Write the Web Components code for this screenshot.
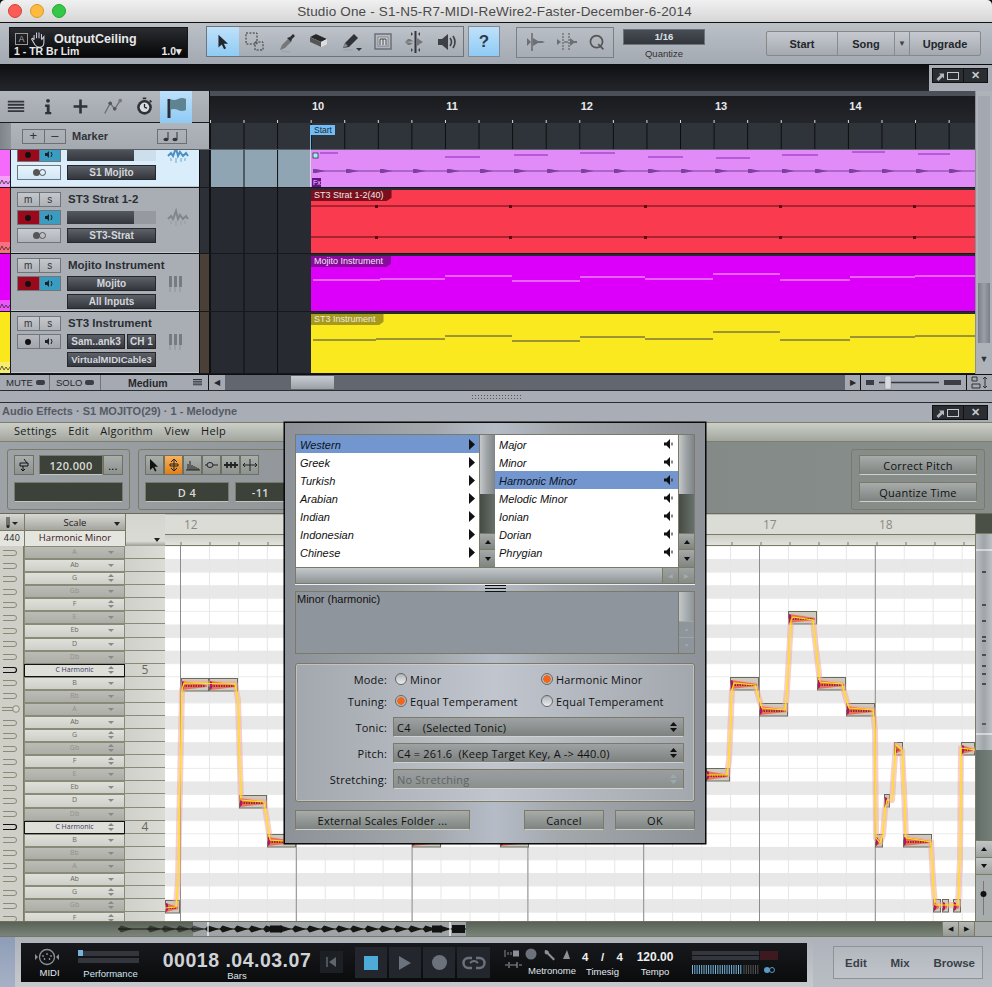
<!DOCTYPE html>
<html><head><meta charset="utf-8"><title>Studio One</title>
<style>
html,body{margin:0;padding:0;background:#111}
body{width:992px;height:987px;overflow:hidden;font-family:"Liberation Sans",Arial,sans-serif;display:flex;flex-direction:column}
</style></head><body>
<x-titlebar>Studio One - S1-N5-R7-MIDI-ReWire2-Faster-December-6-2014</x-titlebar>
<x-toolbar></x-toolbar>
<x-darkband></x-darkband>
<x-arrange></x-arrange>
<x-grip></x-grip>
<x-melodyne></x-melodyne>
<x-transport></x-transport>
<script>
const ICONS={
arrow:`<path d="M6 3v14l3.600-3.200 2.600 5.200 2.200-1-2.500-5.100h4.600z" fill="#23272d"/>`,
range:`<rect x="2" y="2" width="11" height="11" fill="none" stroke="#333" stroke-dasharray="2 1.400"/><rect x="11" y="11" width="8" height="8" fill="none" stroke="#333" stroke-dasharray="2 1.400"/>`,
dropper:`<path d="M4 19l2-5 6-6 3 3-6 6z" fill="#777"/><path d="M11 7l3-1 3-3 2 2-3 3-1 3z" fill="#2b2e33"/><path d="M5 20l9 1" stroke="#999" opacity=".6"/>`,
eraser:`<path d="M2 6l6-3 11 5v5l-6 3L2 11z" fill="#eee"/><path d="M2 6l6-3 11 5-6 3z" fill="#26282c"/><path d="M2 6v5l11 5v-5z" fill="#555"/><path d="M13 11l6-3v5l-6 3z" fill="#ddd"/>`,
pencil:`<path d="M3 17l2-5 9-9 4 4-9 9z" fill="#2f3237"/><path d="M3 17l2-5 3 3z" fill="#888"/><path d="M3 19h10" stroke="#999" opacity=".7"/><path d="M16 17h6l-3 3z" fill="#333"/>`,
mute:`<rect x="3" y="3" width="16" height="15" fill="none" stroke="#6b7078" stroke-width="1.500"/><rect x="6" y="6" width="10" height="9" fill="#fff" opacity=".5" stroke="#555"/><path d="M8 14V8h6v6M11 8v6" fill="none" stroke="#444"/>`,
split:`<path d="M1 11l3-3h2l3 2h3M1 11l3 3h2l3-2" fill="#777"/><path d="M13 7l6 4-6 4z" fill="#777"/><rect x="10.500" y="0" width="2" height="22" fill="#33363c"/><path d="M9 3L7 1v4zM14 3l2-2v4zM9 19l-2-2v4zM14 19l2-2v4z" fill="#444"/>`,
speaker:`<path d="M2 8h4l6-5v16l-6-5H2z" fill="#3d4046"/><path d="M14 7q3 4 0 8M17 5q4 6 0 12" fill="none" stroke="#3d4046" stroke-width="1.600"/>`,
hand:`<path d="M5 12V6M8 10V3M11 10V3M14 11V5M5 12l-2-2-1 1 4 7q2 3 6 3 5 0 5-6V8l-3 4" fill="none" stroke="#ccd" stroke-width="1.300"/>`,
burger:`<path d="M2 5h18M2 8.500h18M2 12h18M2 15.500h18" stroke="#33363c" stroke-width="2"/>`,
info:`<circle cx="11" cy="3.500" r="2.300" fill="#2f3237"/><path d="M7.500 8h5.500v9h2v3H7.500v-3h2v-6h-2z" fill="#2f3237"/>`,
plus:`<path d="M11 3v16M3 11h16" stroke="#2f3237" stroke-width="3"/>`,
auto:`<path d="M3 18l6-11 5 6 6-9" fill="none" stroke="#6c7078" stroke-width="1.400"/><circle cx="9" cy="7" r="2" fill="#555"/><circle cx="14" cy="13" r="2" fill="#555"/><circle cx="20" cy="4" r="2" fill="#777"/>`,
clock:`<circle cx="11" cy="12" r="8.500" fill="#2f3237"/><circle cx="11" cy="12" r="5.500" fill="#d9dde0"/><path d="M11 12V8M11 12l3 1" stroke="#222" stroke-width="1.500"/><path d="M9 1.500h4M17 4l2 2" stroke="#2f3237" stroke-width="2"/>`,
flag:`<path d="M4 3v19" stroke="#2b2e33" stroke-width="3"/><path d="M5 3q4 2 8 0t8 0v11q-4 2-8 0t-8 0z" fill="#5f8491"/>`,
t1:`<path d="M7 1v18" stroke="#555" stroke-width="1.200"/><path d="M2 6v8l4-4zM8 6l5 3h4l3 1-3 1h-4l-5 3z" fill="#6b7078"/>`,
t2:`<path d="M7 1v18M13 1v18" stroke="#555" stroke-dasharray="2 1"/><path d="M1 7v6l4-3zM8 10h4M14 6l4 3h3v2h-3l-4 3z" fill="#6b7078"/><path d="M8 10h4" stroke="#555"/>`,
q:`<circle cx="11" cy="10" r="7" fill="none" stroke="#555" stroke-width="2"/><path d="M13 13l6 6" stroke="#555" stroke-width="2"/>`,
pop:`<path d="M3 18l8-8-3-3h10v10l-3-3-8 8z" fill="#b4b7bc"/>`,
};
function def(name,css,render){
  customElements.define(name,class extends HTMLElement{
    connectedCallback(){
      if(this.shadowRoot)return;
      const r=this.attachShadow({mode:'open'});
      r.innerHTML=`<style>${css}</style>`+render(this);
    }
  });
}
def('x-i',`:host{display:inline-flex;align-items:center;justify-content:center}svg{display:block}`,
 e=>{const s=e.getAttribute('s')||22;return `<svg width="${s}" height="${s}" viewBox="0 0 22 22">${ICONS[e.getAttribute('n')]}</svg>`});

def('x-titlebar',`:host{display:flex;flex:0 0 22px;height:22px;align-items:center;position:relative;background:linear-gradient(#f0f0f0,#d6d6d6);border-bottom:1px solid #111;border-radius:5px 5px 0 0;color:#4a4a4a;font-size:13.500px;padding-left:8px;letter-spacing:.16px}
 .l{display:flex;gap:8px}.l i{width:12px;height:12px;border-radius:50%;display:block}
 .t{flex:1;text-align:center;padding-right:69px;white-space:nowrap}`,
 ()=>`<div class="l"><i style="background:#fb5c55;border:.5px solid #d8403a"></i><i style="background:#fcbb3e;border:.5px solid #d89a20"></i><i style="background:#35c748;border:.5px solid #1ea92f"></i></div><div class="t"><slot></slot></div>`);

def('x-toolbar',`:host{display:flex;flex:0 0 41px;height:41px;align-items:flex-start;background:linear-gradient(#bcc1c8,#a3a9b1);border-bottom:1px solid #0c0c0c;box-sizing:content-box;color:#222}
 .param{margin:4px 0 0 9px;width:179px;height:31px;background:linear-gradient(#2a2c30,#060607);box-sizing:border-box;position:relative;color:#e8e8ea;font-weight:bold;display:grid;grid-template-columns:1fr auto;grid-template-rows:18px 11px;padding:0 5px 0 4px;border:1px solid #16171a}
 .a{display:inline-block;border:1px solid #999;color:#aaa;width:11px;height:10px;font-size:9px;text-align:center;line-height:10px;font-weight:normal}
 .top{grid-column:1/3;display:flex;align-items:center;gap:2px;height:18px;box-sizing:border-box;font-size:12.500px;padding-top:3px;margin-left:1px}
 .top b{margin-left:4px}
 .b{font-size:10.500px;line-height:11px}
 .tools{margin:3px 0 0 18px;height:31px;display:flex;border:1px solid #6f747b;box-sizing:border-box;width:258px;background:linear-gradient(#bec3ca,#a6acb4)}
 .tools>*{width:32px;flex:0 0 32px}
 .on{background:linear-gradient(#bfe1fb,#8fcbf5)}
 .q{margin:3px 0 0 4px;width:32px;height:31px;box-sizing:border-box;display:flex;align-items:center;justify-content:center;font-weight:bold;font-size:17px;color:#2f3a48;background:linear-gradient(#bfe1fb,#8fcbf5);border:1px solid #858b92}
 .g2{margin:4px 0 0 16px;width:98px;height:31px;box-sizing:border-box;border:1px solid #7a7f86;display:flex;align-items:center;padding:0 3px;justify-content:space-around}
 .qz{margin:6px 0 0 9px;width:82px;text-align:center;font-size:9.500px;color:#333}
 .qz div{background:linear-gradient(#474c54,#33373d);color:#dfe3e8;font-weight:bold;font-size:9.500px;height:16px;line-height:14px;margin-bottom:3px;border:1px solid #6e7279;box-sizing:border-box}
 .btns{margin:8px 0 0 61px;display:flex;height:25px;font-weight:bold;font-size:11px;color:#23262b;border:1px solid #888;border-radius:2px;box-sizing:border-box;background:linear-gradient(#c6cad0,#a4a9b0)}
 .btns span{display:flex;align-items:center;justify-content:center;border-right:1px solid #868b92;box-sizing:border-box}`,
 ()=>`<div class="param"><div class="top"><span class="a">A</span><x-i n="hand" s="18"></x-i><b>OutputCeiling</b></div><div class="b">1 - TR Br Lim</div><div class="b">1.0▾</div></div>
 <div class="tools"><span class="on" style="display:flex;align-items:center;justify-content:center"><x-i n="arrow" s="20"></x-i></span>${['range','dropper','eraser','pencil','mute','split','speaker'].map(n=>`<x-i n="${n}"></x-i>`).join('')}</div>
 <div class="q">?</div>
 <div class="g2"><x-i n="t1"></x-i><x-i n="t2"></x-i><x-i n="q" s="19"></x-i></div>
 <div class="qz"><div>1/16</div>Quantize</div>
 <div class="btns"><span style="width:71px">Start</span><span style="width:57px">Song</span><span style="width:15px;font-size:8px;color:#444">▼</span><span style="width:70px;border:0">Upgrade</span></div>`);

def('x-winbtns',`:host{display:flex;width:56px;height:15px;background:#2a2d32;border:1px solid #111;box-sizing:border-box;align-items:center;color:#bbb;font-size:11px}
 .p{flex:0 0 31px;display:flex;align-items:center;gap:1px;border-right:1px solid #111;height:100%;padding-left:2px;box-sizing:border-box}
 .r{width:10px;height:6px;border:1px solid #c6c9cf}
 .x{flex:1;text-align:center;font-weight:bold;color:#c4c8cd}`,
 ()=>`<div class="p"><x-i n="pop" s="11"></x-i><div class="r"></div></div><div class="x">✕</div>`);

def('x-darkband',`:host{display:flex;flex:0 0 26px;height:26px;justify-content:flex-end;background:linear-gradient(#0f1012,#24262b)}
 .w{width:63px;background:#a9aeb6;padding:3px 4px 0 3px;box-sizing:border-box}`,
 ()=>`<div class="w"><x-winbtns></x-winbtns></div>`);

def('x-btnpair',`:host{display:flex;width:44px;height:15px;box-sizing:border-box;border:1px solid #70747b;background:linear-gradient(#c4c8cd,#aeb2b8);font-size:10px;color:#333}
 span{flex:1;display:flex;align-items:center;justify-content:center}
 span+span{border-left:1px solid #70747b}`,
 e=>`<span>m</span><span>s</span>`);
def('x-recpair',`:host{display:flex;width:44px;height:15px;box-sizing:border-box;border:1px solid #70747b}
 span{flex:1;display:flex;align-items:center;justify-content:center}
 .a{background:#9b0a1c}.b{background:#3a9cc0;border-left:1px solid #70747b}
 :host([off]) .a,:host([off]) .b{background:linear-gradient(#b5b9be,#a3a7ad)}
 i{width:6px;height:6px;border-radius:50%;background:#111}`,
 ()=>`<span class="a"><i></i></span><span class="b"><svg width="9" height="9" viewBox="0 0 9 9"><path d="M0 3h2l2-2v7L2 6H0z" fill="#1c2228"/><path d="M6 2q2 2.500 0 5" stroke="#1c2228" fill="none"/></svg></span>`);
def('x-dd',`:host{display:flex;height:15px;flex:1;box-sizing:border-box;align-items:center;justify-content:center;background:linear-gradient(#5d6169,#33363c);border:1px solid #25272b;color:#d3d6db;font-weight:bold;font-size:10px;white-space:nowrap}`,()=>`<slot></slot>`);
def('x-toggle',`:host{display:flex;width:44px;height:15px;box-sizing:border-box;align-items:center;justify-content:center;border:1px solid #70747b;background:linear-gradient(#c8ccd1,#afb3b9)}
 :host([sel]){background:linear-gradient(#e8f4fb,#cfe8f6)} i{display:block;width:7px;height:7px;border-radius:50%;background:#555}
 i+i{background:transparent;border:1px solid #555;margin-left:-1px;width:5px;height:5px}`,()=>`<i></i><i></i>`);
def('x-fader',`:host{display:flex;flex:1;height:13px;margin-top:1px;background:#969aa0;box-sizing:border-box} i{display:block;width:75%;background:linear-gradient(#54585f,#33363c)} :host([sel]){background:#cddfea}`,()=>`<i></i>`);
def('x-clip',`:host{display:block;position:relative;overflow:hidden;width:664px}
 .l{position:absolute;left:0;top:0;height:11px;font-size:9px;line-height:11px;padding:0 8px 0 3px;white-space:nowrap;color:#e9e9e9;clip-path:polygon(0 0,100% 0,100% 70%,94% 100%,0 100%)}
 svg{display:block}`,
 e=>{
  const h=+e.getAttribute('h'),top=+e.getAttribute('y0'),k=e.getAttribute('k');let s='';
  const Y=y=>y-top,X=x=>x-311;
  if(k=='1'){
    [[320,338,153],[445,480,157],[514,548,155],[580,615,153],[648,683,157],[716,750,158],[782,818,155],[852,885,152],[918,950,154]].forEach(a=>s+=`<path d="M${X(a[0])} ${Y(a[2])}H${X(a[1])}" stroke="#8e28b2"/>`);
    s+=`<path d="M2 ${Y(171)}H664" stroke="#7f3f9e"/>`;
    for(let x=313;x<970;x+=67){for(const dx of [0,33]){s+=`<path d="M${X(x+dx)} ${Y(169)}l3 0 7 1.500 3 .5-3 .5-7 1.500-3 0z" fill="#7f3f9e"/>`}}
    s+=`<rect x="2" y="${Y(153)}" width="5" height="5" fill="#9ff0ff" stroke="#222" stroke-width=".7"/><rect x="1" y="${Y(178)}" width="9" height="9" fill="#6a0f8e"/>`;
  }
  if(k=='2'){
    s+=`<path d="M0 ${Y(205)}H664M0 ${Y(236)}H664" stroke="#5d0a14"/>`;
    [376,510,645,780,914].forEach(x=>{s+=`<rect x="${X(x)-1}" y="${Y(204)}" width="3" height="3" fill="#5d0a14"/><rect x="${X(x)-1}" y="${Y(235)}" width="3" height="3" fill="#5d0a14"/>`});
  }
  if(k=='3'){
    [[313,380,279],[380,445,278],[445,512,275],[512,580,280],[580,645,276],[645,713,278],[713,780,273],[780,850,279],[850,915,276],[915,975,275]].forEach(a=>s+=`<path d="M${X(a[0])} ${Y(a[2])}H${X(a[1])}" stroke="#f3c4ff"/>`);
  }
  if(k=='4'){
    [[313,376,339],[376,445,338],[445,512,335],[512,580,340],[580,645,336],[645,713,338],[713,780,331],[780,850,339],[850,915,336],[915,975,335]].forEach(a=>s+=`<path d="M${X(a[0])} ${Y(a[2])}H${X(a[1])}" stroke="#3f3f4a"/>`);
  }
  const lab=e.getAttribute('label');
  const fx=k=='1'?`<span style="position:absolute;left:2px;top:${Y(178)}px;font-size:7px;color:#e9d8f0;line-height:9px;white-space:nowrap">Fx</span>`:'';
  return `<svg width="664" height="${h}">${s}</svg>${lab?`<div class="l" style="background:${e.getAttribute('lb')}">${lab}</div>`:''}${fx}`;
 });
def('x-track',`:host{display:grid;grid-template-columns:10px 1px 188px 1px 9px 1px 100px 665px;flex:none;background:#111;border-bottom:1px solid #16181b;box-sizing:border-box}
 .strip{position:relative;display:flex;flex-direction:column;justify-content:flex-end}
 .strip svg{display:block}
 .panel{background:#a9adb4;display:grid;grid-template-columns:44px 89px 1fr;grid-template-rows:15px 15px 15px;gap:3px 6px;padding:4px 0 0 6px;align-content:start;border-bottom:1px solid #c4c8cc}
 :host([sel]) .panel{background:#d9eefa}
 .panel>*{min-width:0}
 .name{font-weight:bold;font-size:11.500px;color:#2a2d33;line-height:15px;grid-column:2/4;grid-row:1;white-space:nowrap;padding-left:1px}
 .ic{display:flex;align-items:center;padding-left:5px;grid-row:2;grid-column:3}
 .slotrow{display:flex;gap:2px}
 .col{background:#2d3137}
 .bg{background-color:#272b31;background-image:linear-gradient(90deg,#0c0d0f 1px,transparent 1px);background-size:33.58px 100%;background-position:33.5px 0}
 :host([sel]) .bg{background-color:#8fa5b3}
 .clipw{padding:1px 0 0 1px;overflow:hidden}`,
 e=>{const c=e.getAttribute('color'),d=e.getAttribute('dark'),w=e.getAttribute('wave');
  const sel=e.hasAttribute('sel');
  const nm=e.getAttribute('name');
  const wav=w=='keys'
   ?`<svg width="20" height="20" viewBox="0 0 20 20"><path d="M2 2h3v11h-3zM7 2h3v11h-3zM12 2h3v11h-3z" fill="#777b81"/><path d="M3 13v5M8 13v5M13 13v5" stroke="#8e9298"/></svg>`
   :`<svg width="22" height="20" viewBox="0 0 22 20"><path d="M1 11l3-3 2 3 3-8 2 8 2-4 3 4 3-3 2 3" fill="none" stroke="${sel?'#4a90c4':'#82868c'}" stroke-width="2"/><path d="M4 13v3M9 13v5M14 13v4M18 13v3" stroke="${sel?'#6aa6d1':'#979ba1'}"/></svg>`;
  return `<div class="strip" style="background:${c}"><svg width="10" height="11"><rect width="10" height="11" fill="${d}"/><path d="M0 8l2-4 2 4 2-3 2 3 2-3" fill="none" stroke="#222" stroke-width=".7"/></svg></div><div style="background:#1a1c20"></div>
  <div class="panel">
   ${nm?`<x-btnpair style="grid-row:1;grid-column:1"></x-btnpair><div class="name">${nm}</div>`:''}
   <x-recpair ${e.hasAttribute('recoff')?'off':''} style="grid-row:2;grid-column:1"></x-recpair><div class="slotrow" style="grid-row:2;grid-column:2"><slot name="a"></slot></div><div class="ic">${wav}</div>
   <div class="slotrow" style="grid-row:3;grid-column:1"><slot name="c"></slot></div><div class="slotrow" style="grid-row:3;grid-column:2"><slot name="b"></slot></div>
  </div><div style="background:#0d0e10"></div><div class="col" style="background:${e.getAttribute('col')||'#2d3137'}"></div><div style="background:#0d0e10"></div>
  <div class="bg"></div><div class="clipw" style="background:${e.getAttribute('cb')}"><slot name="clip"></slot></div>`});

def('x-vscroll',`:host{display:flex;flex-direction:column;width:17px;background:#aeb3ba;box-sizing:border-box;border-left:1px solid #8a8f96}
 .tr{height:187px;margin:5px 2px 0 2px;background:#a4a9b1}
 .th{height:60px;margin:0 2px;background:linear-gradient(90deg,#7a8088,#9ba0a8,#7a8088)}
 .ar{flex:1;display:flex;align-items:center;justify-content:center;font-size:9px;color:#333}`,
 ()=>`<div class="tr"></div><div class="th"></div><div class="ar">▼</div>`);

def('x-arrange',`:host{display:flex;flex-direction:column;flex:0 0 299px;height:299px;background:#111;overflow:hidden}
 .top{display:flex;height:284px}
 .main{width:975px;flex:none;display:flex;flex-direction:column}
 .r1{display:flex;height:32px;flex:none}
 .tools{flex:0 0 209px;width:209px;background:linear-gradient(#b2b6bd,#a3a8af);display:flex;align-items:center;padding-left:5px;box-sizing:border-box;gap:10px;border-bottom:1px solid #1a1b1e}
 .tools>*{width:22px;flex:none}
 .fl{width:32px!important;height:32px;background:linear-gradient(#bde0fb,#8fcaf4);display:flex;align-items:center;justify-content:center;margin-left:-5px}
 .ruler{flex:1;min-width:0;overflow:hidden;margin-left:1px;background:linear-gradient(#4b4f57 5px,#191b1f 5px,#24262b);position:relative;display:flex;color:#e9eaec;font-weight:bold;font-size:11px;padding:9px 0 0 102px;box-sizing:border-box}
 .ruler span{width:134.330px;flex:none}
 .ticks{position:absolute;left:0;right:0;bottom:0;height:3px;background-image:linear-gradient(90deg,#dcdcdc 1px,transparent 1px);background-size:33.58px 3px;background-position:33.5px 0}
 .r2{display:flex;height:27px;flex:none;border-bottom:1px solid #5b5f66;box-sizing:border-box}
 .mk{flex:0 0 209px;width:209px;display:grid;grid-template-columns:11px 55px 1fr 30px;background:linear-gradient(#b0b4bb,#a5a9b0);align-items:center;padding-right:22px;box-sizing:border-box;font-weight:bold;font-size:11px;color:#303339}
 .mk .g{background:linear-gradient(90deg,#7f848b,#90959b);height:100%;margin-right:0}
 .pm{margin-left:11px;display:flex;width:44px;height:15px;border:1px solid #6b6f76;box-sizing:border-box;font-weight:normal;font-size:13px;line-height:12px}
 .pm span{flex:1;text-align:center}.pm span+span{border-left:1px solid #6b6f76}
 .mk .lbl{padding-left:6px}
 .nb{width:30px;height:15px;border:1px solid #6b6f76;box-sizing:border-box;display:flex;align-items:center;justify-content:center}
 .nb svg{display:block}
 .tl{flex:1;margin-left:1px;background-color:#2f333a;background-image:linear-gradient(90deg,#0c0d0f 1px,transparent 1px);background-size:33.58px 100%;background-position:33.5px 0;padding-left:100px;box-sizing:border-box}
 .st{display:block;border-left:1px solid #6fbdf5;height:100%;box-sizing:border-box;width:200px}
 .st b{display:block;background:#72bdf5;width:24px;height:10px;margin:2px 0 0 0;font-size:8.500px;font-weight:normal;color:#1d2a36;line-height:10px;padding-left:3px;box-sizing:border-box}
 .tracks{overflow:hidden;flex:1;display:flex;flex-direction:column}
 .bot{display:flex;height:15px;background:#a5a9b1;border-top:1px solid #0e0f11;box-sizing:content-box;font-size:9.500px;color:#25272c}
 .bot>div{display:flex;align-items:center;box-sizing:border-box;border-right:1px solid #70747b;height:100%}
 .pill{display:inline-block;width:9px;height:5px;border-radius:2px;background:#3b3e44;margin-left:3px}
 .sb{flex:0 0 652px;border-right:1px solid #111!important;padding-left:5px;gap:5px}
 .sbt{flex:1;height:100%;background:#62676f;position:relative}
 .sbt i{position:absolute;left:66px;top:1px;height:13px;width:43px;background:linear-gradient(#c8ccd2,#9ba0a7)}
 .z{gap:5px;padding-left:5px;flex:0 0 106px;border-right:1px solid #111!important}
 .zb{height:5px;background:#3b3e44;display:block}`,
 ()=>`<div class="top"><div class="main">
 <div class="r1"><div class="tools"><x-i n="burger" s="20"></x-i><x-i n="info" s="18"></x-i><x-i n="plus" s="19"></x-i><x-i n="auto" s="20"></x-i><x-i n="clock" s="19"></x-i><span class="fl"><x-i n="flag"></x-i></span></div>
  <div class="ruler"><span>10</span><span>11</span><span>12</span><span>13</span><span>14</span><div class="ticks"></div></div></div>
 <div class="r2"><div class="mk"><div class="g"></div><div class="pm"><span>+</span><span>–</span></div><div class="lbl">Marker</div><div class="nb"><svg width="20" height="11"><path d="M6 1v7M15 1v7" stroke="#333"/><ellipse cx="4" cy="8.500" rx="2.500" ry="1.800" fill="#333"/><ellipse cx="13" cy="8.500" rx="2.500" ry="1.800" fill="#333"/></svg></div></div>
  <div class="tl"><span class="st"><b>Start</b></span></div></div>
 <div class="tracks">
  <x-track color="#f569fb" dark="#f4a0f8" cb="#dadada" sel col="#2d3137" style="height:63px;margin-top:-25px">
    <x-fader sel slot="a"></x-fader><x-toggle sel slot="c"></x-toggle><x-dd slot="b">S1 Mojito</x-dd>
    <x-clip slot="clip" k="1" y0="126" h="62" style="background:#e08bf7"></x-clip></x-track>
  <x-track name="ST3 Strat 1-2" color="#fa3a4e" dark="#f9707c" cb="#272b31" style="height:66px">
    <x-fader slot="a"></x-fader><x-toggle slot="c"></x-toggle><x-dd slot="b">ST3-Strat</x-dd>
    <x-clip slot="clip" k="2" y0="189" h="63" label="ST3 Strat 1-2(40)" lb="#7c0f1c" style="background:#fa3a4e;margin-top:1px"></x-clip></x-track>
  <x-track name="Mojito Instrument" color="#e200fb" dark="#ed55fb" cb="#272b31" wave="keys" col="#4a4038" style="height:58px">
    <x-dd slot="a">Mojito</x-dd><span slot="c"></span><x-dd slot="b">All Inputs</x-dd>
    <x-clip slot="clip" k="3" y0="255" h="56" label="Mojito Instrument" lb="#8a0a9e" style="background:#dc00fb;margin-top:1px"></x-clip></x-track>
  <x-track name="ST3 Instrument" color="#fbe81c" dark="#f6ec70" cb="#272b31" wave="keys" col="#4a4038" recoff style="height:62px">
    <x-dd slot="a" style="flex:0 0 58px">Sam..ank3</x-dd><x-dd slot="a">CH 1</x-dd><span slot="c"></span><x-dd slot="b" style="font-size:9.500px">VirtualMIDICable3</x-dd>
    <x-clip slot="clip" k="4" y0="313" h="59" label="ST3 Instrument" lb="#a79a18" style="background:#fbe920;margin-top:1px"></x-clip></x-track>
 </div></div><x-vscroll></x-vscroll></div>
 <div class="bot"><div style="width:50px;padding-left:6px">MUTE<i class="pill"></i></div><div style="width:51px;padding-left:6px">SOLO<i class="pill"></i></div>
  <div style="flex:0 0 108px;justify-content:space-between;padding:0 5px 0 27px;border-right:1px solid #111;font-weight:bold;font-size:10.500px">Medium<x-i n="burger" s="11"></x-i></div>
  <div class="sb"><span style="font-size:8px">◀</span><div class="sbt"><i></i></div><span style="font-size:8px;padding-right:4px">▶</span></div>
  <div class="z"><i class="zb" style="width:8px"></i><svg width="60" height="15"><path d="M0 7.500H60" stroke="#33363c" stroke-width="1.500"/><rect x="6" y="1" width="6" height="13" fill="#d8dbdf" stroke="#888" stroke-width=".5"/></svg><i class="zb" style="width:17px"></i></div>
  <div style="border:0;padding-left:4px"><svg width="18" height="13"><path d="M1 1h5v4H1zM1 8h8v4H1z" fill="none" stroke="#333"/><path d="M14 1v11M12 3l2-2 2 2M12 10l2 2 2-2" stroke="#333" fill="none"/></svg></div></div>`);

def('x-grip',`:host{display:flex;flex:0 0 13px;height:13px;background:#a8adb5;border-top:1px solid #2a2c30;border-bottom:1px solid #2a2c30;box-sizing:border-box;align-items:center;justify-content:center}
 i{display:block;width:50px;height:5px;background-image:radial-gradient(#555 40%,transparent 45%);background-size:3px 3px}`,()=>`<i></i>`);

def('x-mbtn',`:host{display:flex;align-items:center;justify-content:center;box-sizing:border-box;height:20px;background:linear-gradient(#a7acab,#7e8481);border:1px solid #7a7a66;border-bottom-color:#d0d0c4;color:#111;font-family:"Open Sans","Noto Sans",sans-serif;font-size:11px;letter-spacing:.25px;white-space:nowrap}`,()=>`<slot></slot>`);
def('x-radio',`:host{display:flex;align-items:center;gap:3px;font-family:"Open Sans",sans-serif;font-size:11px;letter-spacing:.2px;color:#111}
 i{width:12px;height:12px;border-radius:50%;display:block;box-sizing:border-box;border:1px solid #666;background:linear-gradient(#aeb3b8,#eceef0)}
 :host([on]) i{background:radial-gradient(circle,#f0661a 0 3.500px,#bbb 4px)}`,()=>`<i></i><slot></slot>`);
def('x-select',`:host{display:flex;align-items:center;height:20px;box-sizing:border-box;border:1px solid #7a7a66;border-bottom-color:#d2d2c8;background:linear-gradient(#9ea2a4,#7d8280);padding:0 6px 0 3px;font-family:"Open Sans",sans-serif;font-size:11px;letter-spacing:.2px;color:#111;flex:1;white-space:pre}
 :host([dis]){color:#5f6462;background:linear-gradient(#9a9e9f,#8b908f)}
 .s{flex:1}svg{display:block}`,e=>`<span class="s"><slot></slot></span><svg width="7" height="10" viewBox="0 0 7 10"><path d="M0 4l3.500-4 3.500 4zM0 6l3.500 4 3.500-4z" fill="${e.hasAttribute('dis')?'#9aa':'#111'}"/></svg>`);
def('x-listscroll',`:host{display:flex;flex-direction:column;width:15px;flex:none;background:#5e6660;border-left:1px solid #7a7a66}
 .th{height:59px;background:linear-gradient(90deg,#c4c8cb,#9ca1a4,#7f8487)}
 .tr{flex:1;background:linear-gradient(90deg,#454c45,#67706a)}
 .ar{height:15px;flex:none;border-top:1px solid #7a7a66;background:linear-gradient(#a5aaaa,#80857f);display:flex;align-items:center;justify-content:center}
 .ar i{display:block;width:0;height:0;border:3px solid transparent;border-bottom:4px solid #111;border-top:0}
 .ar.d i{border-top:4px solid #111;border-bottom:0}`,
 ()=>`<div class="th"></div><div class="tr"></div><div class="ar"><i></i></div><div class="ar d" style="height:17px"><i></i></div>`);
def('x-scale-dialog',`:host{position:absolute;left:284px;top:19px;width:422px;height:422px;box-sizing:border-box;border:1px solid #0a0a0a;background:linear-gradient(90deg,#8d9298 0,#a3a8ad 35%,#b6bcc7 50%,#a3a8ad 65%,#8d9298 100%);padding:11px 10px 0;display:flex;flex-direction:column;color:#111;font-family:"Open Sans",sans-serif;box-shadow:0 0 0 .5px #000}
 .lists{border:1px solid #7a7a66;display:flex;flex-direction:column;height:150px;box-sizing:border-box;background:#fff}
 .two{display:flex;height:132px;overflow:hidden}
 .list{flex:1;background:#fff;overflow:hidden;font-family:"Liberation Sans",sans-serif;font-style:italic;font-size:11px;color:#111}
 .row{height:18px;line-height:16px;padding:2px 4px 0;box-sizing:border-box;display:flex;justify-content:space-between;align-items:center}
 .row svg{margin-top:-2px}
 .row.s{background:#7296cd;color:#0a1426}
 .hs{display:flex;height:16px;border-top:1px solid #7a7a66;box-sizing:border-box;flex:1}
 .hs .bar{flex:1;background:linear-gradient(#c3c8cb,#8f9497)}
 .hs .ar{width:15px;background:linear-gradient(#9ea3a3,#868b86);border-left:1px solid #7a7a66;text-align:center;font-size:6px;line-height:16px;color:#aaa}
 .split{height:7px;flex:none;border-top:1px solid #eee;display:flex;align-items:center;justify-content:center;box-sizing:border-box}
 .split i{display:block;width:21px;height:5px;border-top:1px solid #111;border-bottom:1px solid #111;position:relative;background:linear-gradient(#111,#111) 0 50%/100% 1px no-repeat}
 .desc{height:63px;flex:none;border:1px solid #7a7a66;box-sizing:border-box;background:#8f959d;display:flex;font-family:"Liberation Sans",sans-serif;font-size:11px;padding-left:1px;line-height:14px;padding-top:0}
 .desc .t{flex:1}
 .ds{width:15px;flex:none;display:flex;flex-direction:column;border-left:1px solid #7a7a66}
 .ds b{height:31px;background:linear-gradient(90deg,#c2c7ca,#8f9497);display:block}
 .ds u{height:16px;background:#8f959d;display:block;border-top:1px solid #a0a5a8;font-size:5px;text-align:center;text-decoration:none;color:#aaa;line-height:14px}
 .grp{margin-top:9px;height:139px;flex:none;box-sizing:border-box;border:1px solid #7a7a66;border-radius:3px;padding:4px 10px 0 0;display:grid;grid-template-columns:97px 1fr;align-content:start;font-size:11px;letter-spacing:.2px;background:linear-gradient(90deg,#a3a8ae,#c0c5ce 50%,#a3a8ae);box-shadow:inset 0 0 0 .5px #d8d8d8}
 .lb{text-align:right;padding-right:6px;display:flex;align-items:center;justify-content:flex-end}
 .rr{display:grid;grid-template-columns:146px 1fr;padding-left:2px;height:22px}
 .ss{display:flex;height:20px;margin-bottom:6px}
 .lb.h{height:20px;margin-bottom:6px}
 .lb.r{height:22px}
 .f{display:flex;margin-top:8px}
 .sp{width:26px;flex:1 1 auto}`,
 ()=>{
  const L=['Western','Greek','Turkish','Arabian','Indian','Indonesian','Chinese'];
  const R=['Major','Minor','Harmonic Minor','Melodic Minor','Ionian','Dorian','Phrygian'];
  const arr=`<svg width="6" height="11"><path d="M0 0l6 5.500L0 11z" fill="#111"/></svg>`;
  const spk=`<svg width="10" height="10" viewBox="0 0 10 10"><path d="M0 3.500h2.500L6 0v10L2.500 6.500H0z" fill="#111"/><path d="M8 3.500v3" stroke="#111"/></svg>`;
  return `<div class="lists"><div class="two"><div class="list">${L.map((t,i)=>`<div class="row ${i==0?'s':''}"><span>${t}</span>${arr}</div>`).join('')}</div><x-listscroll></x-listscroll><div class="list">${R.map((t,i)=>`<div class="row ${i==2?'s':''}"><span>${t}</span>${spk}</div>`).join('')}</div><x-listscroll></x-listscroll></div>
   <div class="hs"><div class="bar"></div><div class="ar">◀</div><div class="ar">▶</div></div></div>
  <div class="split"><i></i></div>
  <div class="desc"><div class="t">Minor (harmonic)</div><div class="ds"><b></b><u>▲</u><u>▼</u></div></div>
  <div class="grp">
   <div class="lb r">Mode:</div><div class="rr"><x-radio>Minor</x-radio><x-radio on>Harmonic Minor</x-radio></div>
   <div class="lb r" style="margin-bottom:5px">Tuning:</div><div class="rr" style="margin-bottom:5px"><x-radio on>Equal Temperament</x-radio><x-radio>Equal Temperament</x-radio></div>
   <div class="lb h">Tonic:</div><div class="ss"><x-select>C4    (Selected Tonic)</x-select></div>
   <div class="lb h">Pitch:</div><div class="ss"><x-select>C4 = 261.6  (Keep Target Key, A -&gt; 440.0)</x-select></div>
   <div class="lb h">Stretching:</div><div class="ss"><x-select dis>No Stretching</x-select></div>
  </div>
  <div class="f"><x-mbtn style="width:175px">External Scales Folder ...</x-mbtn><div class="sp"></div><x-mbtn style="width:80px">Cancel</x-mbtn><x-mbtn style="width:80px;margin-left:11px">OK</x-mbtn></div>`});

def('x-scale-col',`:host{display:grid;grid-template-columns:24px 101px 40px;grid-template-rows:32px 375px;width:165px;font-family:"Open Sans",sans-serif}
 .hk{display:flex;flex-direction:column;font-size:9.500px;text-align:center;color:#222}
 .hk span{height:17px;border-bottom:1px solid #7a7a66;box-sizing:border-box;background:linear-gradient(#d8d8d2,#a5a59f);display:flex;align-items:center;justify-content:center}
 .hk svg{display:block}
 .hk em{font-style:normal;flex:1;background:#e5e5e0;line-height:14px;font-size:9px;letter-spacing:.3px}
 .hs{display:flex;flex-direction:column;font-size:9.500px;text-align:center;color:#222;border-left:1px solid #7a7a66}
 .hs span{height:17px;line-height:17px;border-bottom:1px solid #7a7a66;box-sizing:border-box;background:linear-gradient(#d8d8d2,#a5a59f);position:relative}
 .hs span::after,.hc::after{content:"";position:absolute;right:5px;bottom:4px;border:3px solid transparent;border-top:4px solid #222;border-bottom:0}
 .hs em{font-style:normal;flex:1;background:#e5e5e0;line-height:14px;font-size:9.500px;color:#3a1520}
 .hc{background:linear-gradient(#d5d5cf,#dbdbd6 85%,#9c9c94);border-left:1px solid #7a7a66}
 .rows{grid-column:1/4;display:grid;grid-auto-rows:13.08px;overflow:hidden;background:#d4d4ce}
 .r{display:grid;grid-template-columns:24px 101px 40px}
 .k{background:#cfcfc8;border-right:1px solid #7a7a66;display:flex;align-items:center;padding-left:2px;box-sizing:border-box}
 .k svg{display:block}
 .n{background:linear-gradient(#e0e0da,#cfcfc9);border:1px solid #8a8a78;box-sizing:border-box;font-size:7px;color:#6a6a66;text-align:center;line-height:10px;position:relative}
 .n.d{background:linear-gradient(#bcbcb6,#adada7);color:#91918a}
 .n.c{border-color:#111;color:#3a3a66;background:#dfdfda}
 .n i{position:absolute;right:10px;top:4px;border:3px solid transparent;border-top:3px solid #888;border-bottom:0;width:0;height:0}
 .n.u i{top:1px;border:3px solid transparent;border-bottom:3px solid #888;border-top:0}
 .n.u i+i{top:6px;border:3px solid transparent;border-top:3px solid #888;border-bottom:0}
 .v{background:linear-gradient(90deg,#d0d0ca,#dcdcd6);border-bottom:1px solid #8a8a78;box-sizing:border-box;font-size:12px;text-align:center;line-height:11px;color:#66665e}`,
 ()=>{const seq=['A','Ab','G','Gb','F','E','Eb','D','Db','C','B','Bb'];let h='';
  for(let i=0;i<29;i++){const n=seq[i%12],dis=['A','Gb','E','Db','Bb'].includes(n),c=n=='C';
    const dbl=['G','F','C'].includes(n)||n=='Gb'&&i>12;
    const lab=c?'C Harmonic':n;
    const circle=i==12;
    const stroke=c?'#111':'#8a8a78';
    const v=i==9?'5':i==21?'4':'';
    h+=`<div class="r"><div class="k"><svg width="20" height="8">${circle?`<path d="M0 2.500H11M0 5.500H11" stroke="${stroke}"/><circle cx="14" cy="4" r="3.300" fill="#d8d8d2" stroke="${stroke}"/>`:`<path d="M1 1.500H12a2.500 2.500 0 0 1 0 5H1" fill="none" stroke="${stroke}" stroke-width="${c?1.200:1}"/>`}</svg></div><div class="n ${dis?'d':''} ${c?'c':''} ${dbl?'u':''}">${lab}${dbl?'<i></i><i></i>':'<i></i>'}</div><div class="v">${v}</div></div>`}
  return `<div class="hk"><span><svg width="16" height="13"><path d="M3 1v9M5 1v9" stroke="#222"/><circle cx="4" cy="10.500" r="1.500" fill="#222"/><path d="M8 6h6l-3 3z" fill="#222"/></svg></span><em>440</em></div><div class="hs"><span>Scale</span><em>Harmonic Minor</em></div><div class="hc" style="position:relative"></div><div class="rows">${h}</div>`});

def('x-roll-grid',`:host{display:flex;flex-direction:column;width:810px;height:407px;background:#fff}
 .rl{height:21px;flex:none;display:flex;background:#dcdcd6;border-top:1px solid #bbb;border-bottom:1px solid #7a7a66;box-sizing:border-box;color:#8a8a82;font-family:"Open Sans",sans-serif;font-size:12px;line-height:19px}
 .b2{height:11px;flex:none;border-bottom:1px solid #7a7a66;box-sizing:border-box;background-image:linear-gradient(90deg,#77776a 1px,transparent 1px),linear-gradient(#cfcfc9,#e2e2dc);background-size:29px 3px,100% 100%;background-position:15.500px bottom,0 0;background-repeat:repeat-x,no-repeat}
 svg{display:block}`,
 ()=>{let s='';const top=546;
  for(let i=0;i<29;i++){const y=top+i*13.08;const n=i%12; if([1,3,6,8,11].includes(n))s+=`<rect x="165" y="${y}" width="810" height="13.080" fill="#e8e8e8"/>`;else s+=`<path d="M165 ${y}H975" stroke="#ebebeb"/>`;}
  for(let x=180.5;x<975;x+=28.95)s+=`<path d="M${x} 546V921" stroke="#e6e6e6"/>`;
  for(let b=0;b<7;b++){const x=180.5+b*115.8;s+=`<path d="M${x} 546V921" stroke="#8c8c8c"/>`}
  const notes=[[165,900,15],[181,678,28],[209,678,29],[239,795,28],[267,834,29],[412,834,29],[500,834,29],[706,768,24],[730,677,29],[759,703,29],[788,611,29],[817,677,29],[846,703,29],[875,834,8],[884,794,6],[894,742,9],[903,834,29],[933,899,8],[942,899,7],[953,899,8],[961,742,14]];
  const curve=[[165,908],[176,907],[178,880],[182,690],[184,683],[235,684],[238,700],[241,800],[264,802],[267,820],[270,840],[296,842]];
  const curve2=[[700,775],[727,775],[729,760],[732,690],[734,683],[755,685],[758,695],[762,708],[785,710],[787,690],[791,620],[793,617],[813,620],[815,640],[820,682],[842,684],[845,695],[849,708],[873,710],[875,730],[876,838],[880,843],[883,835],[885,810],[887,800],[892,800],[894,770],[896,745],[902,750],[904,790],[906,838],[931,842],[933,880],[935,905],[958,905],[960,860],[961,748],[975,750]];
  const P=a=>a.map((p,i)=>(i?'L':'M')+p[0]+' '+p[1]).join('');
  notes.forEach(n=>{s+=`<rect x="${n[0]+.5}" y="${n[1]+.5}" width="${n[2]-1}" height="12.500" fill="#cbcbc2" stroke="#6b6b5c"/>`});
  [curve,curve2].forEach(c=>{s+=`<path d="${P(c)}" fill="none" stroke="#f6a898" stroke-width="6" stroke-linejoin="round" opacity=".55"/>`});
  notes.forEach(n=>{const x=n[0]+1,y=n[1]+2,w=n[2]-3;s+=`<path d="M${x} ${y+1}l${w} 4 0 2-${w} 3z" fill="#e8705a"/><path d="M${x+1} ${y+6}h${Math.max(w-3,1)}" stroke="#7a0f20" stroke-width="1.500" stroke-dasharray="1.500 1"/><path d="M${x} ${y+1}l2 1v6l-2 2z" fill="#b5126a"/>`});
  [curve,curve2].forEach(c=>{s+=`<path d="${P(c)}" fill="none" stroke="#ffe800" stroke-width="1.200" stroke-linejoin="round"/>`});
  return `<div class="rl"><span style="margin-left:19px;width:579px">12</span><span style="width:116px">17</span><span>18</span></div><div class="b2"></div><svg width="810" height="375" viewBox="165 546 810 375">${s}</svg>`});

def('x-roll-scroll',`:host{display:flex;flex-direction:column;width:17px;height:407px;background:#aeb3b5;border-left:1px solid #7a7a66;box-sizing:border-box}
 .a{height:19px;flex:none;background:#4a5046}
 .b{height:217px;flex:none;background:linear-gradient(90deg,#b8bdc0,#a0a5aa 50%,#bcc0c4);position:relative;border-top:1px solid #7a7a66;box-sizing:border-box}
 .b svg{display:block}
 .c{height:90px;flex:none;background:linear-gradient(90deg,#646e68,#75807a)}
 .ar{height:16px;flex:none;border-top:1px solid #7a7a66;background:linear-gradient(#c2c6c6,#9ea2a0);display:flex;align-items:center;justify-content:center}
 .ar i{border:3.500px solid transparent;border-bottom:4px solid #111;border-top:0;width:0;height:0;display:block}
 .ar.d i{border-top:4px solid #111;border-bottom:0}
 .sl{flex:1;border-top:1px solid #7a7a66;display:flex;justify-content:center;background:#a7acad;position:relative}
 .sl svg{display:block}`,
 ()=>{const ys=[38,71,87,103,107,121,132,140,150];let t='';
  ys.forEach(y=>t+=`<path d="M6 ${y}h4" stroke="#111" stroke-width="1.200"/>`);
  return `<div class="a"></div><div class="b"><svg width="16" height="216"><path d="M0 16h16M0 200h16" stroke="#fff"/>${t}<path d="M6 190h4" stroke="#111"/></svg></div><div class="c"></div><div class="ar"><i></i></div><div class="ar d"><i></i></div><div class="sl"><svg width="16" height="48"><path d="M7.500 6V40" stroke="#777"/><circle cx="7.500" cy="19" r="3" fill="#111"/></svg></div>`});

def('x-overview',`:host{display:flex;height:16px;flex:none;background:linear-gradient(#5a6157,#7b8479);border-top:1px solid #6f6f5d;border-bottom:1px solid #777766;box-sizing:border-box;position:relative}
 .m{flex:1;position:relative}
 svg{display:block;position:absolute;left:0;top:0}
 .ar{width:15px;border-left:1px solid #7a7a66;background:linear-gradient(#b6bab6,#959a94);text-align:center;font-size:6.500px;line-height:14px;color:#111;flex:none}
 .c{width:17px;border-left:1px solid #7a7a66;background:#a5aaa8;flex:none}`,
 ()=>{let s=`<rect x="193" y="0" width="273" height="14" fill="#9da3a6"/>`;
  s+=`<path d="M118 7H466" stroke="#16160f" stroke-width="1"/>`;
  for(let x=118;x<465;x+=14.5){if(x>125&&x<136)continue;s+=`<path d="M${x} 7l3-3.500 8 2.500 3 1-3 1-8 2.500z" fill="#161611" opacity="${x<193?.6:1}"/>`}
  s+=`<rect x="270" y="3.500" width="12" height="7" fill="#111"/><rect x="432" y="3.500" width="10" height="7" fill="#111"/><rect x="452" y="3" width="13" height="8" fill="#111"/>`;
  s+=`<path d="M208 0V14M450 0V14" stroke="#fff" stroke-width="1.200"/>`;
  return `<div class="m"><svg width="945" height="14">${s}</svg></div><div class="ar">◀</div><div class="ar">▶</div><div class="c"></div>`});

def('x-melodyne',`:host{display:flex;flex-direction:column;flex:0 0 534px;height:534px;position:relative;overflow:visible;background:#9ba0a4}
 .t{height:19px;flex:none;background:#a9aeb6;display:flex;align-items:center;justify-content:space-between;padding:0 4px 0 2px;font-weight:bold;font-size:11px;color:#555a63}
 .t span{margin-top:-3px}
 .m{height:20px;flex:none;background:linear-gradient(#cbcfc8,#a3a69f);border-top:1px solid #7e7e6c;border-bottom:1px solid #7e7e6c;box-sizing:border-box;display:flex;align-items:center;padding:0 0 3px 14px;gap:11.500px;font-family:"Open Sans",sans-serif;font-size:11px;letter-spacing:.25px;color:#1a1a1a}
 .tb{height:72px;flex:none;background:linear-gradient(90deg,#9da2a7,#8e9398 40%,#848a87 70%,#888e8b);display:flex;padding-top:7px;box-sizing:border-box;border-bottom:1px solid #6a6a5a;font-family:"Open Sans",sans-serif;font-size:11px;letter-spacing:.35px}
 .pn{border:1px solid #7a7a66;border-radius:3px;box-sizing:border-box;height:61px;padding:5px 6px;display:flex;flex-direction:column;gap:7px}
 .row{display:flex;height:20px}
 .ds{background:#3c4139;color:#dadad5;display:flex;align-items:center;justify-content:center;height:20px;box-sizing:border-box;border:1px solid #7a7a66;border-bottom-color:#c5c5b8;font-weight:600}
 .sq{flex:0 0 19px;box-sizing:border-box;border:1px solid #707060;height:20px;background:linear-gradient(#a9aeab,#8c928f);display:flex;align-items:center;justify-content:center;position:relative}
 .sq.on{background:linear-gradient(#f8b25d,#e07f18)}
 .sq svg{display:block}
 .rl{display:flex;height:407px;flex:none}`,
 ()=>{
 const ic=[`<path d="M3 1v11l3-2.500 2 4 1.500-.7-2-4h3.500z" fill="#111"/>`,`<path d="M8 1v12M5 4l3-3 3 3M5 10l3 3 3-3M4 6h8v2H4z" stroke="#222" fill="none"/>`,`<path d="M1 12h14M3 12V6M5 12V3M7 12V7M9 12V8M11 12V9M13 12V10" stroke="#222"/>`,`<path d="M1 7h2a3 2.500 0 0 1 6 0a3 2.500 0 0 1-6 0M9 7h5" stroke="#222" fill="none"/>`,`<path d="M1 7h14M4 4v6M8 4v6M12 4v6" stroke="#222" stroke-width="1.800"/>`,`<path d="M1 7h14M8 1v12M3 5l-2 2 2 2M13 5l2 2-2 2" stroke="#222" fill="none"/>`];
 return `<div class="t"><span>Audio Effects · S1 MOJITO(29) · 1 - Melodyne</span><x-winbtns></x-winbtns></div>
 <div class="m"><span>Settings</span><span>Edit</span><span>Algorithm</span><span>View</span><span>Help</span></div>
 <div class="tb">
  <div class="pn" style="width:123px;margin-left:7px"><div class="row"><span class="sq" style="flex:0 0 20px"><svg width="14" height="14"><path d="M3 5h8v3H3zM7 1l3 4M6 8v5M4 11l2 2 2-2" stroke="#111" fill="none"/></svg></span><span class="ds" style="width:64px;margin-left:5px">120.000</span><span class="sq" style="flex:1">...</span></div><div class="ds" style="font-weight:normal"></div></div>
  <div class="pn" style="width:170px;margin-left:8px;padding-left:6px"><div class="row">${ic.map((p,i)=>`<span class="sq ${i==1?'on':''}"><svg width="16" height="14">${p}</svg></span>`).join('')}</div><div class="row"><span class="ds" style="width:84px">D 4</span><span class="ds" style="width:60px;margin-left:6px;justify-content:flex-end;padding-right:25px">-11</span></div></div>
  <div style="flex:1"></div>
  <div class="pn" style="width:134px;margin-right:7px;padding:5px 7px"><x-mbtn>Correct Pitch</x-mbtn><x-mbtn>Quantize Time</x-mbtn></div>
 </div>
 <div class="rl"><x-scale-col></x-scale-col><x-roll-grid></x-roll-grid><x-roll-scroll></x-roll-scroll></div>
 <x-overview></x-overview>
 <x-scale-dialog></x-scale-dialog>`});

def('x-transport',`:host{display:flex;flex:0 0 50px;height:50px;background:linear-gradient(#aeb3bb,#b9bec5);box-sizing:border-box;position:relative}
 .lft{width:15px;background:linear-gradient(#8e9db8,#a6b1c5)}
 .wrap{width:798px;background:linear-gradient(#aeb3ba,#c6cace);padding:6px 6px 5px;box-sizing:border-box}
 .p{height:39px;background:linear-gradient(#17191c,#0a0b0d);box-sizing:border-box;display:flex;position:relative;color:#dfe3e8;font-size:9.500px;text-align:center;-webkit-font-smoothing:antialiased}
 .c{display:flex;flex-direction:column;align-items:center;flex:none}
 .c svg{display:block}
 .big{font-weight:bold;font-size:19.500px;color:#cfd2d6;letter-spacing:.5px;white-space:pre;line-height:24px;padding-top:5px;height:28px;box-sizing:border-box}
 .bar{height:5px;background:#33373d;margin-bottom:2px;position:relative;display:block;width:61px}
 .bar i{position:absolute;left:0;top:-1px;height:6px;width:5px;background:#72b4dd}
 .btn{flex:none;height:31px;width:32px;margin-top:4px;background:#23272d;display:flex;align-items:center;justify-content:center}
 .hd{font-weight:bold;font-size:11.500px;color:#eee;line-height:15px;padding-top:7px;height:23px;box-sizing:border-box;white-space:pre}
 .lab{color:#e4e8ee;margin-top:1px}
 .r{flex:1;display:flex;padding:9px 0 0 20px}
 .em{width:150px;height:33px;border:1px solid #8e9299;box-sizing:border-box;display:flex;font-weight:bold;font-size:11.500px;color:#3a3f47;align-items:center;justify-content:space-between;padding:0 7px 0 11px;background:linear-gradient(#b2b7be,#c0c4ca)}`,
 ()=>`<div class="lft"></div><div class="wrap"><div class="p">
 <div class="c" style="width:52px;margin-left:0;padding-top:4px"><svg width="26" height="20" viewBox="0 0 26 20"><circle cx="13" cy="10" r="7.500" fill="none" stroke="#8d929a" stroke-width="1.300"/><circle cx="9" cy="9" r=".8" fill="#ccc"/><circle cx="13" cy="7" r=".8" fill="#ccc"/><circle cx="17" cy="9" r=".8" fill="#ccc"/><circle cx="10.500" cy="12" r=".8" fill="#ccc"/><circle cx="15.500" cy="12" r=".8" fill="#ccc"/><path d="M1 7l3 3-3 3zM25 7l-3 3 3 3z" fill="#8d929a"/></svg><span class="lab" style="margin-top:0;padding-left:5px">MIDI</span></div>
 <div class="c" style="width:61px;margin-left:5px;padding-top:8px"><span class="bar"><i></i></span><span class="bar"></span><span style="margin-top:3px;color:#d4e4f2;padding-left:4px;white-space:nowrap">Performance</span></div>
 <div class="c" style="width:154px;margin-left:21px"><span class="big">00018 .04.03.07</span><span style="margin-top:-1px">Bars</span></div>
 <div class="btn" style="width:23px;height:22px;margin:8px 0 0 6px;background:#1c2025"><svg width="12" height="12"><path d="M1 1v10" stroke="#5f656d" stroke-width="1.500"/><path d="M10 1L3 6l7 5z" fill="#5f656d"/></svg></div>
 <div class="btn" style="margin-left:12px"><i style="display:block;width:14px;height:14px;background:#4eaad7"></i></div>
 <div class="btn" style="margin-left:2px"><svg width="14" height="16"><path d="M1 1l12 7-12 7z" fill="#6c727b"/></svg></div>
 <div class="btn" style="margin-left:2px"><i style="display:block;width:15px;height:15px;border-radius:50%;background:#6c727b"></i></div>
 <div class="btn" style="margin-left:2px;width:33px"><svg width="24" height="14" viewBox="0 0 24 14"><path d="M10 2H6.500a5 5 0 0 0 0 10H10M14 12h3.500a5 5 0 0 0 0-10H14" fill="none" stroke="#6c727b" stroke-width="2.400"/><path d="M8 7q4-4 8 0" fill="none" stroke="#6c727b" stroke-width="2"/></svg></div>
 <div class="c" style="width:70px;margin-left:14px;padding-top:5px"><svg width="70" height="24"><path d="M1 9V2M4 4v3M7 4v3" stroke="#888" fill="none"/><path d="M9 2.500h6v6H9z" fill="#8c9198"/><circle cx="27" cy="6" r="5.500" fill="#6c727b"/><path d="M41 2q4 0 4 3l6 6-1.500 1.500-6-6q-4 0-2.500-4.500z" fill="#8c9198"/><path d="M59 11l4-9 3 9z" fill="#8c9198"/><path d="M1 17h3M5 14v6M6 17h7M13 14v6M15 17h3" stroke="#8c9198" fill="none" stroke-width="1.200"/></svg><span style="margin:-7px 0 0 26px;white-space:nowrap">Metronome</span></div>
 <div class="c" style="width:37px;margin-left:10px"><span class="hd" style="word-spacing:3px">4  /  4</span><span class="lab" style="margin-top:0">Timesig</span></div>
 <div class="c" style="width:38px;margin-left:15px"><span class="hd" style="font-size:12px">120.00</span><span class="lab" style="margin-top:0">Tempo</span></div>
 <div class="c" style="width:86px;margin-left:18px;padding-top:6px;align-items:flex-start"><svg width="86" height="28"><rect width="67" height="4" y="2" fill="#33373d"/><rect width="67" height="4" y="7" fill="#33373d"/><rect x="68" y="2" width="18" height="9" fill="#3c1a20"/><g stroke="#75b6dd">${Array.from({length:22},(_,i)=>`<path d="M${i*2.300+.5} 16v9"/>`).join('')}</g><g stroke="#555">${Array.from({length:7},(_,i)=>`<path d="M${52+i*2.300} 16v9"/>`).join('')}</g><circle cx="75" cy="21" r="3" fill="#5b9ac4"/><circle cx="80" cy="21" r="2.500" fill="none" stroke="#5b9ac4"/></svg></div>
 </div></div>
 <div class="r"><div class="em"><span>Edit</span><span>Mix</span><span>Browse</span></div></div>`);
</script>
</body></html>
